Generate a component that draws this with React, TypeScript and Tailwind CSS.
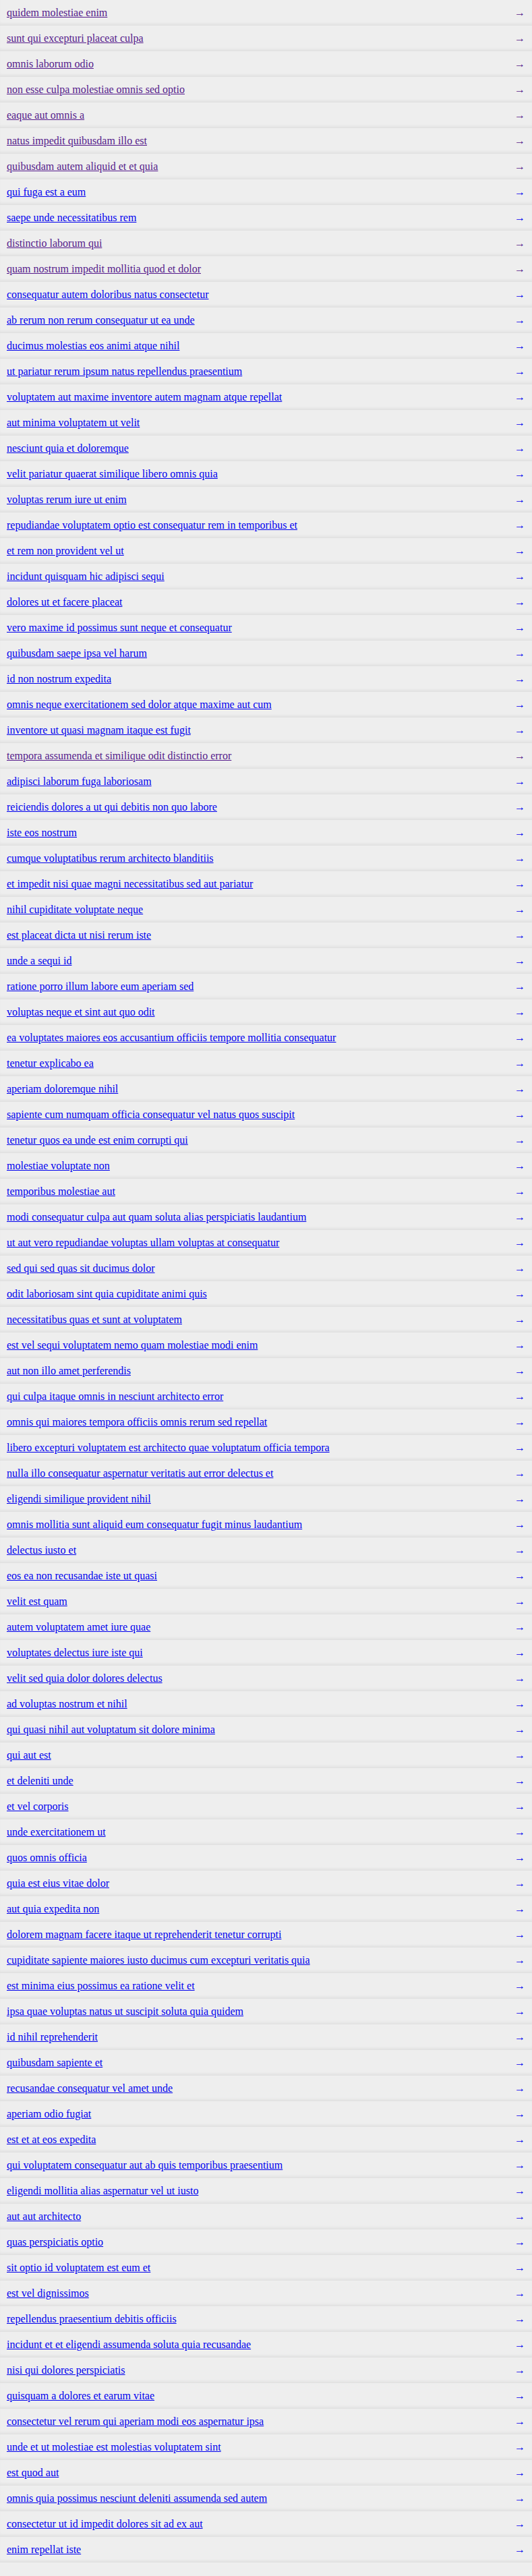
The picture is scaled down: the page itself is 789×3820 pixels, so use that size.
const titles: string[] = [
  "quidem molestiae enim",
  "sunt qui excepturi placeat culpa",
  "omnis laborum odio",
  "non esse culpa molestiae omnis sed optio",
  "eaque aut omnis a",
  "natus impedit quibusdam illo est",
  "quibusdam autem aliquid et et quia",
  "qui fuga est a eum",
  "saepe unde necessitatibus rem",
  "distinctio laborum qui",
  "quam nostrum impedit mollitia quod et dolor",
  "consequatur autem doloribus natus consectetur",
  "ab rerum non rerum consequatur ut ea unde",
  "ducimus molestias eos animi atque nihil",
  "ut pariatur rerum ipsum natus repellendus praesentium",
  "voluptatem aut maxime inventore autem magnam atque repellat",
  "aut minima voluptatem ut velit",
  "nesciunt quia et doloremque",
  "velit pariatur quaerat similique libero omnis quia",
  "voluptas rerum iure ut enim",
  "repudiandae voluptatem optio est consequatur rem in temporibus et",
  "et rem non provident vel ut",
  "incidunt quisquam hic adipisci sequi",
  "dolores ut et facere placeat",
  "vero maxime id possimus sunt neque et consequatur",
  "quibusdam saepe ipsa vel harum",
  "id non nostrum expedita",
  "omnis neque exercitationem sed dolor atque maxime aut cum",
  "inventore ut quasi magnam itaque est fugit",
  "tempora assumenda et similique odit distinctio error",
  "adipisci laborum fuga laboriosam",
  "reiciendis dolores a ut qui debitis non quo labore",
  "iste eos nostrum",
  "cumque voluptatibus rerum architecto blanditiis",
  "et impedit nisi quae magni necessitatibus sed aut pariatur",
  "nihil cupiditate voluptate neque",
  "est placeat dicta ut nisi rerum iste",
  "unde a sequi id",
  "ratione porro illum labore eum aperiam sed",
  "voluptas neque et sint aut quo odit",
  "ea voluptates maiores eos accusantium officiis tempore mollitia consequatur",
  "tenetur explicabo ea",
  "aperiam doloremque nihil",
  "sapiente cum numquam officia consequatur vel natus quos suscipit",
  "tenetur quos ea unde est enim corrupti qui",
  "molestiae voluptate non",
  "temporibus molestiae aut",
  "modi consequatur culpa aut quam soluta alias perspiciatis laudantium",
  "ut aut vero repudiandae voluptas ullam voluptas at consequatur",
  "sed qui sed quas sit ducimus dolor",
  "odit laboriosam sint quia cupiditate animi quis",
  "necessitatibus quas et sunt at voluptatem",
  "est vel sequi voluptatem nemo quam molestiae modi enim",
  "aut non illo amet perferendis",
  "qui culpa itaque omnis in nesciunt architecto error",
  "omnis qui maiores tempora officiis omnis rerum sed repellat",
  "libero excepturi voluptatem est architecto quae voluptatum officia tempora",
  "nulla illo consequatur aspernatur veritatis aut error delectus et",
  "eligendi similique provident nihil",
  "omnis mollitia sunt aliquid eum consequatur fugit minus laudantium",
  "delectus iusto et",
  "eos ea non recusandae iste ut quasi",
  "velit est quam",
  "autem voluptatem amet iure quae",
  "voluptates delectus iure iste qui",
  "velit sed quia dolor dolores delectus",
  "ad voluptas nostrum et nihil",
  "qui quasi nihil aut voluptatum sit dolore minima",
  "qui aut est",
  "et deleniti unde",
  "et vel corporis",
  "unde exercitationem ut",
  "quos omnis officia",
  "quia est eius vitae dolor",
  "aut quia expedita non",
  "dolorem magnam facere itaque ut reprehenderit tenetur corrupti",
  "cupiditate sapiente maiores iusto ducimus cum excepturi veritatis quia",
  "est minima eius possimus ea ratione velit et",
  "ipsa quae voluptas natus ut suscipit soluta quia quidem",
  "id nihil reprehenderit",
  "quibusdam sapiente et",
  "recusandae consequatur vel amet unde",
  "aperiam odio fugiat",
  "est et at eos expedita",
  "qui voluptatem consequatur aut ab quis temporibus praesentium",
  "eligendi mollitia alias aspernatur vel ut iusto",
  "aut aut architecto",
  "quas perspiciatis optio",
  "sit optio id voluptatem est eum et",
  "est vel dignissimos",
  "repellendus praesentium debitis officiis",
  "incidunt et et eligendi assumenda soluta quia recusandae",
  "nisi qui dolores perspiciatis",
  "quisquam a dolores et earum vitae",
  "consectetur vel rerum qui aperiam modi eos aspernatur ipsa",
  "unde et ut molestiae est molestias voluptatem sint",
  "est quod aut",
  "omnis quia possimus nesciunt deleniti assumenda sed autem",
  "consectetur ut id impedit dolores sit ad ex aut",
  "enim repellat iste",
];

const visited = [1, 2, 3, 4, 5, 6, 7, 10, 11, 30];

const App: React.FC = () => {
  return (
    <div className="min-h-[3820px] bg-[#eeeeee] pb-5 font-['Liberation_Serif',serif] text-base">
      <ul>
        {titles.map((title, i) => {
          const id = i + 1;
          const color = visited.includes(id) ? "text-[#551a8b]" : "text-[#0000ee]";
          return (
            <li
              key={id}
              className="flex h-[38px] items-center justify-between bg-[#eeeeee] px-2.5 shadow-[inset_0_-5px_5px_-3px_rgba(0,0,0,0.07)]"
            >
              <a href={"#/albums/" + id} className={color + " underline"}>
                {title}
              </a>
              <span className={color}>→</span>
            </li>
          );
        })}
      </ul>
    </div>
  );
};

export default App;
